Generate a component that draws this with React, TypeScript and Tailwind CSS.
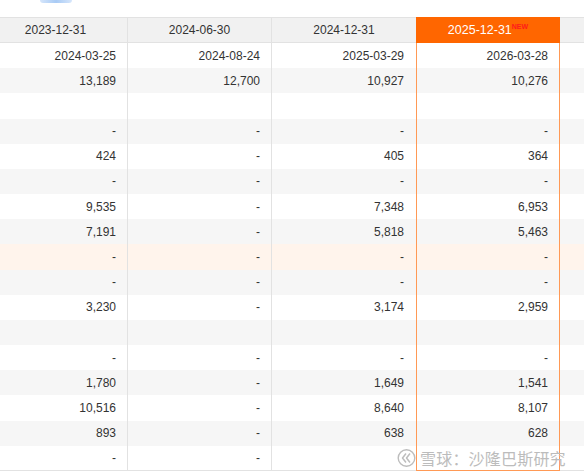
import React from "react"

const font = { fontFamily: '"Liberation Sans", Arial, sans-serif' }

type Row = { cells: string[]; tone: "white" | "gray" | "orange" }

const values: string[][] = [
  ["2024-03-25", "2024-08-24", "2025-03-29", "2026-03-28"],
  ["13,189", "12,700", "10,927", "10,276"],
  ["", "", "", ""],
  ["-", "-", "-", "-"],
  ["424", "-", "405", "364"],
  ["-", "-", "-", "-"],
  ["9,535", "-", "7,348", "6,953"],
  ["7,191", "-", "5,818", "5,463"],
  ["-", "-", "-", "-"],
  ["-", "-", "-", "-"],
  ["3,230", "-", "3,174", "2,959"],
  ["", "", "", ""],
  ["-", "-", "-", "-"],
  ["1,780", "-", "1,649", "1,541"],
  ["10,516", "-", "8,640", "8,107"],
  ["893", "-", "638", "628"],
  ["-", "-", "", ""],
]

const rows: Row[] = values.map((cells, i) => ({
  cells,
  tone: i === 8 ? "orange" : i % 2 === 1 ? "gray" : "white",
}))

const toneClass = {
  white: "bg-white",
  gray: "bg-[#f6f6f6]",
  orange: "bg-[#fff4ec]",
}

function HeaderRow() {
  return (
    <div className="flex h-[26px] -ml-[16px] text-[12px] text-[#333]">
      <div className="w-[144px] shrink-0 flex items-center justify-center bg-[#f1f1f1] border-t border-r border-b border-[#e2e2e2]">
        2023-12-31
      </div>
      <div className="w-[144px] shrink-0 flex items-center justify-center bg-[#f1f1f1] border-t border-r border-b border-[#e2e2e2]">
        2024-06-30
      </div>
      <div className="w-[144px] shrink-0 flex items-center justify-center bg-[#f1f1f1] border-t border-b border-[#e2e2e2]">
        2024-12-31
      </div>
      <div className="w-[144px] shrink-0 flex items-center justify-center bg-[#ff6600] text-white text-[12.5px]">
        <span>2025-12-31</span>
        <span className="self-start mt-[6px] text-[7px] font-bold text-[#ff1a1a] leading-none">NEW</span>
      </div>
      <div className="flex-1 bg-[#f1f1f1] border-t border-b border-[#e2e2e2]" />
    </div>
  )
}

function DataRow({ row, last }: { row: Row; last: boolean }) {
  const bottom = last ? "border-b border-b-[#e2e2e2]" : ""
  return (
    <div className={`flex h-[25.18px] -ml-[16px] text-[12px] text-[#333] ${toneClass[row.tone]}`}>
      <div className={`w-[144px] shrink-0 flex items-center justify-end pr-[11px] border-r border-[#e2e2e2] ${bottom}`}>
        {row.cells[0]}
      </div>
      <div className={`w-[144px] shrink-0 flex items-center justify-end pr-[11px] border-r border-[#e2e2e2] ${bottom}`}>
        {row.cells[1]}
      </div>
      <div className={`w-[144px] shrink-0 flex items-center justify-end pr-[12px] ${bottom}`}>
        {row.cells[2]}
      </div>
      <div
        className={`w-[144px] shrink-0 flex items-center justify-end pr-[11px] border-x border-[#ff9955] ${
          last ? "border-b border-b-[#ff9955]" : ""
        }`}
      >
        {row.cells[3]}
      </div>
      <div className={`flex-1 ${bottom}`} />
    </div>
  )
}

function SnowballLogo() {
  return (
    <svg width="19" height="20" viewBox="0 0 19 20" fill="none">
      <circle cx="9.5" cy="10" r="8.3" stroke="#bdbdbd" strokeWidth="1.4" />
      <path d="M9 5.5 L5.5 10 L9 14.5" stroke="#bdbdbd" strokeWidth="1.5" strokeLinejoin="round" />
      <path d="M13 5.5 L9.5 10 L13 14.5" stroke="#bdbdbd" strokeWidth="1.5" strokeLinejoin="round" />
    </svg>
  )
}

export default function App() {
  return (
    <div className="relative w-[584px] h-[476px] overflow-hidden bg-white" style={font}>
      <div className="h-[17px]">
        <div className="ml-[40px] w-[32px] h-[3px] rounded-b-full bg-gradient-to-r from-[#d6e6fb] via-[#a9cbf5] to-[#d6e6fb]" />
      </div>
      <HeaderRow />
      {rows.map((row, i) => (
        <DataRow key={i} row={row} last={i === rows.length - 1} />
      ))}

      <div className="absolute left-[397px] top-[448px] flex items-center gap-[4px]">
        <SnowballLogo />
        <span
          className="text-[16px] leading-none text-[#bcbcbc] tracking-[0.2px]"
          style={{ fontFamily: '"Noto Sans CJK SC", sans-serif' }}
        >
          雪球：沙隆巴斯研究
        </span>
      </div>
    </div>
  )
}
